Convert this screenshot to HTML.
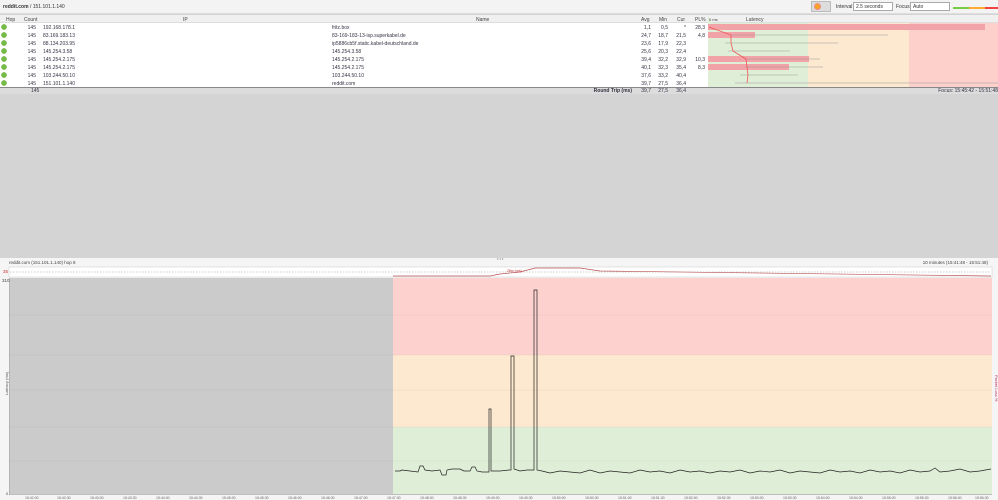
<!DOCTYPE html><html><head><style>
*{margin:0;padding:0;box-sizing:border-box}
body{width:998px;height:500px;background:#d4d4d4;font-family:"Liberation Sans",sans-serif;font-size:5px;color:#333;position:relative;overflow:hidden}
.a{position:absolute}
</style></head><body>
<div class="a" style="left:0;top:0;width:998px;height:14px;background:#f3f3f3;border-bottom:1px solid #ddd"></div>
<div class="a" style="left:3px;top:4px;font-size:5px"><b>reddit.com</b> / 151.101.1.140</div>
<div class="a" style="left:811px;top:1px;width:20px;height:11px;background:#ddd;border:1px solid #bbb"></div>
<div class="a" style="left:814px;top:3px;width:7px;height:7px;border-radius:50%;background:#f5a623;border:1px solid #e88"></div>
<div class="a" style="left:836px;top:4px">Interval</div>
<div class="a" style="left:853px;top:2px;width:40px;height:9px;background:#fff;border:1px solid #aaa;padding:1px 2px">2.5 seconds</div>
<div class="a" style="left:896px;top:4px">Focus</div>
<div class="a" style="left:910px;top:2px;width:40px;height:9px;background:#fff;border:1px solid #aaa;padding:1px 2px">Auto</div>
<div class="a" style="left:953px;top:7px;width:16px;height:2px;background:#7c4"></div>
<div class="a" style="left:969px;top:7px;width:16px;height:2px;background:#fa3"></div>
<div class="a" style="left:985px;top:7px;width:13px;height:2px;background:#e44"></div>
<!-- table -->
<div class="a" style="left:0;top:15px;width:998px;height:72px;background:#fff"></div>
<div class="a" style="left:0;top:15px;width:998px;height:8px;background:#f0f0f0;border-bottom:1px solid #ddd"></div>
<svg class="a" style="left:0;top:15px" width="998" height="80">
<g font-size="5" fill="#444" font-family="Liberation Sans">
<text x="6" y="6">Hop</text><text x="24" y="6">Count</text><text x="183" y="6">IP</text><text x="476" y="6">Name</text>
<text x="641" y="6">Avg</text><text x="659" y="6">Min</text><text x="677" y="6">Cur</text><text x="695" y="6">PL%</text><text x="746" y="6">Latency</text>
</g>
<rect x="708" y="8" width="100" height="64" fill="#dfeed6"/><rect x="808" y="8" width="101" height="64" fill="#fde9cf"/><rect x="909" y="8" width="89" height="64" fill="#fdd0cc"/>
<polygon points="708,1 708,8 712,8" fill="#dfeed6"/>
<text x="709" y="6" font-size="4" fill="#444">0 ms</text>
<g fill="#f2a3a8"><rect x="708" y="9" width="277" height="6"/><rect x="708" y="17" width="47" height="6"/><rect x="708" y="41" width="101" height="6"/><rect x="708" y="49" width="81" height="6"/></g>
<g stroke="#999" stroke-width="0.6"><line x1="730" y1="20" x2="888" y2="20"/><line x1="725" y1="28" x2="838" y2="28"/><line x1="728" y1="36" x2="790" y2="36"/><line x1="745" y1="44" x2="820" y2="44"/><line x1="745" y1="52" x2="823" y2="52"/><line x1="740" y1="60" x2="798" y2="60"/><line x1="735" y1="68" x2="998" y2="68"/></g>
<polyline points="709,12 731,20 731,28 733,36 746,44 747,52 748,60 747,68" fill="none" stroke="#e55" stroke-width="0.8"/>
<g font-size="5" fill="#334" font-family="Liberation Sans">
<g fill="#7b4" stroke="#5a3" stroke-width="0.4"><circle cx="4" cy="12" r="2.6"/><circle cx="4" cy="20" r="2.6"/><circle cx="4" cy="28" r="2.6"/><circle cx="4" cy="36" r="2.6"/><circle cx="4" cy="44" r="2.6"/><circle cx="4" cy="52" r="2.6"/><circle cx="4" cy="60" r="2.6"/><circle cx="4" cy="68" r="2.6"/></g>
<g text-anchor="end"><text x="36" y="14">145</text><text x="36" y="22">145</text><text x="36" y="30">145</text><text x="36" y="38">145</text><text x="36" y="46">145</text><text x="36" y="54">145</text><text x="36" y="62">145</text><text x="36" y="70">145</text><text x="36" y="78">145</text></g>
<text x="43" y="14">192.168.178.1</text><text x="43" y="22">83.169.183.13</text><text x="43" y="30">88.134.203.95</text><text x="43" y="38">145.254.3.58</text><text x="43" y="46">145.254.2.175</text><text x="43" y="54">145.254.2.175</text><text x="43" y="62">103.244.50.10</text><text x="43" y="70">151.101.1.140</text>
<text x="332" y="14">fritz.box</text><text x="332" y="22">83-169-183-13-isp.superkabel.de</text><text x="332" y="30">ip5886cb5f.static.kabel-deutschland.de</text><text x="332" y="38">145.254.3.58</text><text x="332" y="46">145.254.2.175</text><text x="332" y="54">145.254.2.175</text><text x="332" y="62">103.244.50.10</text><text x="332" y="70">reddit.com</text>
<g text-anchor="end"><text x="651" y="14">1,1</text><text x="651" y="22">24,7</text><text x="651" y="30">23,6</text><text x="651" y="38">25,6</text><text x="651" y="46">39,4</text><text x="651" y="54">40,1</text><text x="651" y="62">37,6</text><text x="651" y="70">39,7</text>
<text x="668" y="14">0,5</text><text x="668" y="22">18,7</text><text x="668" y="30">17,9</text><text x="668" y="38">20,3</text><text x="668" y="46">32,2</text><text x="668" y="54">32,3</text><text x="668" y="62">33,2</text><text x="668" y="70">27,5</text>
<text x="686" y="14">*</text><text x="686" y="22">21,5</text><text x="686" y="30">22,3</text><text x="686" y="38">22,4</text><text x="686" y="46">32,9</text><text x="686" y="54">35,4</text><text x="686" y="62">40,4</text><text x="686" y="70">36,4</text>
<text x="705" y="14">28,3</text><text x="705" y="22">4,8</text><text x="705" y="46">10,3</text><text x="705" y="54">8,3</text></g>
</g>
<rect x="0" y="72" width="998" height="1.5" fill="#888"/>
</svg>
<div class="a" style="left:0;top:88px;width:998px;height:6px;background:#dcdcdc"></div>
<svg class="a" style="left:0;top:87px" width="998" height="8"><g font-size="5" fill="#334" font-family="Liberation Sans"><text x="31" y="5">145</text><text x="632" y="5" text-anchor="end" font-weight="bold">Round Trip (ms)</text><text x="651" y="5" text-anchor="end">39,7</text><text x="668" y="5" text-anchor="end">27,5</text><text x="686" y="5" text-anchor="end">36,4</text><text x="998" y="5" text-anchor="end">Focus: 15:45:42 - 15:51:48</text></g></svg>
<!-- bottom -->
<div class="a" style="left:0;top:258px;width:998px;height:242px;background:#f5f5f5"></div>
<svg class="a" style="left:0;top:255px" width="998" height="245">
<text x="497" y="5" font-size="4" fill="#555">• • •</text>
<g font-size="4.5" fill="#444" font-family="Liberation Sans"><text x="9" y="9">reddit.com (151.101.1.140) hop 8</text><text x="988" y="9" text-anchor="end">10 minutes (15:41:48 - 15:51:48)</text></g>
<rect x="9" y="12" width="983" height="10" fill="#fff" stroke="#ccc" stroke-width="0.5"/>
<line x1="10" y1="17" x2="991" y2="17" stroke="#999" stroke-width="0.5" stroke-dasharray="1.5,1.5"/>
<text x="3" y="18" font-size="4.5" fill="#c33">35</text>
<polyline points="393,21 490,21 500,19 520,17 535,13 580,13 600,16 991,21" fill="none" stroke="#b55" stroke-width="0.7"/>
<text x="507" y="17" font-size="3.5" fill="#b33">28m (ms)</text>
<rect x="10" y="23" width="383" height="216" fill="#cbcbcb"/>
<rect x="393" y="23" width="599" height="77" fill="#fdd2ce"/>
<rect x="393" y="100" width="599" height="72" fill="#fde9cf"/>
<rect x="393" y="172" width="599" height="67" fill="#dfeed6"/>
<g stroke="#000" stroke-opacity="0.07" stroke-width="0.5"><line x1="10" y1="60" x2="992" y2="60"/><line x1="10" y1="100" x2="992" y2="100"/><line x1="10" y1="135" x2="992" y2="135"/><line x1="10" y1="172" x2="992" y2="172"/><line x1="10" y1="206" x2="992" y2="206"/></g>
<line x1="9.5" y1="23" x2="9.5" y2="240" stroke="#888" stroke-width="0.6"/>
<line x1="9.5" y1="239.5" x2="992" y2="239.5" stroke="#888" stroke-width="0.6"/>
<text x="2" y="27" font-size="4.5" fill="#444">310</text><text x="6" y="240" font-size="4" fill="#444">0</text>
<text x="8" y="140" font-size="4" fill="#555" transform="rotate(-90 8 140)">Latency (ms)</text>
<text x="995" y="120" font-size="4" fill="#b36" transform="rotate(90 995 120)">Packet Loss %</text>
<polyline fill="none" stroke="#222" stroke-width="0.7" points="395,216 400,216 402,215 410,216 418,217 420,211 423,211 425,215 432,216 440,215 442,220 446,220 447,215 452,214 460,214 464,216 470,216 472,212 475,212 477,216 482,217 489,217 489,154 491,154 491,216 500,216 509,215 511,215 511,101 514,101 514,214 520,216 527,215 534,215 534,35 537,35 537,215 542,216 550,218 560,216 570,217 580,218 590,215 600,218 610,216 620,217 630,218 640,215 650,217 660,216 670,218 680,215 690,217 700,216 710,218 720,216 730,217 740,215 750,218 760,216 770,217 780,215 790,218 800,216 810,217 820,218 830,215 840,217 850,216 860,218 870,215 880,217 890,216 900,218 910,215 920,217 930,216 935,213 940,217 950,216 960,214 970,217 980,216 991,214"/>
<g font-size="3.5" fill="#666"><text x="25" y="244">15:42:00</text><text x="57" y="244">15:42:30</text><text x="90" y="244">15:43:00</text><text x="123" y="244">15:43:30</text><text x="156" y="244">15:44:00</text><text x="189" y="244">15:44:30</text><text x="222" y="244">15:45:00</text><text x="255" y="244">15:45:30</text><text x="288" y="244">15:46:00</text><text x="321" y="244">15:46:30</text><text x="354" y="244">15:47:00</text><text x="387" y="244">15:47:30</text><text x="420" y="244">15:48:00</text><text x="453" y="244">15:48:30</text><text x="486" y="244">15:49:00</text><text x="519" y="244">15:49:30</text><text x="552" y="244">15:50:00</text><text x="585" y="244">15:50:30</text><text x="618" y="244">15:51:00</text><text x="651" y="244">15:51:30</text><text x="684" y="244">15:52:00</text><text x="717" y="244">15:52:30</text><text x="750" y="244">15:53:00</text><text x="783" y="244">15:53:30</text><text x="816" y="244">15:54:00</text><text x="849" y="244">15:54:30</text><text x="882" y="244">15:55:00</text><text x="915" y="244">15:55:30</text><text x="948" y="244">15:56:00</text><text x="975" y="244">15:56:30</text></g>
</svg>
</body></html>
